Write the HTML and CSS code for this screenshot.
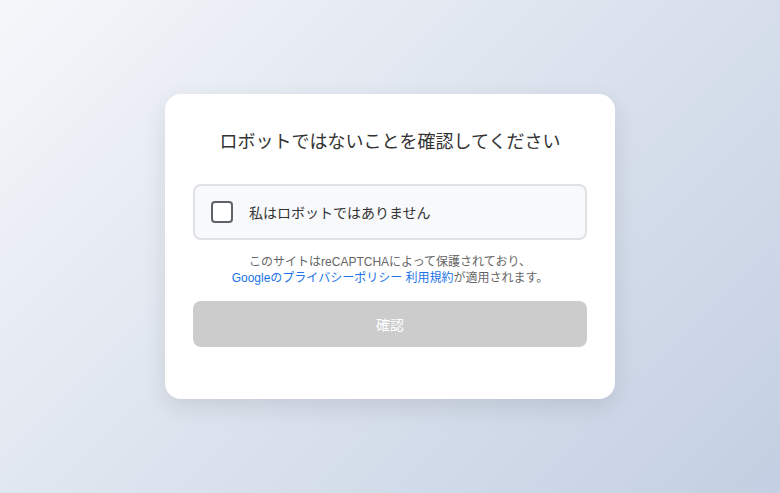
FILE: index.html
```html
<!DOCTYPE html>
<html lang="ja">
<head>
  <meta charset="UTF-8">
  <title>reCAPTCHA 確認</title>
  <link rel="stylesheet" href="styles.css">
</head>
<body>
  <div class="card">
    <h2 class="title">ロボットではないことを確認してください</h2>

    <label class="check-box">
      <span class="check"></span>
      <span class="check-label">私はロボットではありません</span>
    </label>

    <p class="note">このサイトはreCAPTCHAによって保護されており、<br><a href="#">Googleのプライバシーポリシー</a> <a href="#">利用規約</a>が適用されます。</p>

    <button class="submit" disabled>確認</button>
  </div>
</body>
</html>
```

FILE: styles.css
```css
html, body {
  height: 100%;
}
body {
  margin: 0;
  font-family: "Liberation Sans", "Noto Sans CJK JP", sans-serif;
  background: linear-gradient(135deg, #f5f7fa 0%, #c3cfe2 100%);
  display: flex;
  align-items: center;
  justify-content: center;
}
.card {
  width: 394px;
  padding: 30px 28px 52px;
  background: #fff;
  border-radius: 16px;
  box-shadow: 0 8px 24px rgba(0, 0, 0, 0.1);
}
.title {
  margin: 0 0 24px;
  text-align: center;
  font-size: 18px;
  font-weight: normal;
  color: #333;
  line-height: 36px;
}
.check-box {
  display: flex;
  align-items: center;
  gap: 16px;
  height: 52px;
  padding: 0 16px;
  background: #f8f9fa;
  border: 2px solid #dfe1e5;
  border-radius: 8px;
  cursor: pointer;
}
.check {
  width: 18px;
  height: 18px;
  border: 2px solid #5f6368;
  border-radius: 4px;
  background: #fff;
}
.check-label {
  font-size: 14px;
  color: #333;
}
.note {
  margin: 14px 0 15px;
  text-align: center;
  font-size: 12px;
  line-height: 16px;
  color: #666;
}
.note a {
  color: #1a73e8;
  text-decoration: none;
  white-space: nowrap;
}
.submit {
  display: block;
  width: 100%;
  height: 46px;
  border: none;
  border-radius: 8px;
  background: #ccc;
  color: #fff;
  font-family: inherit;
  font-size: 14px;
}
```
